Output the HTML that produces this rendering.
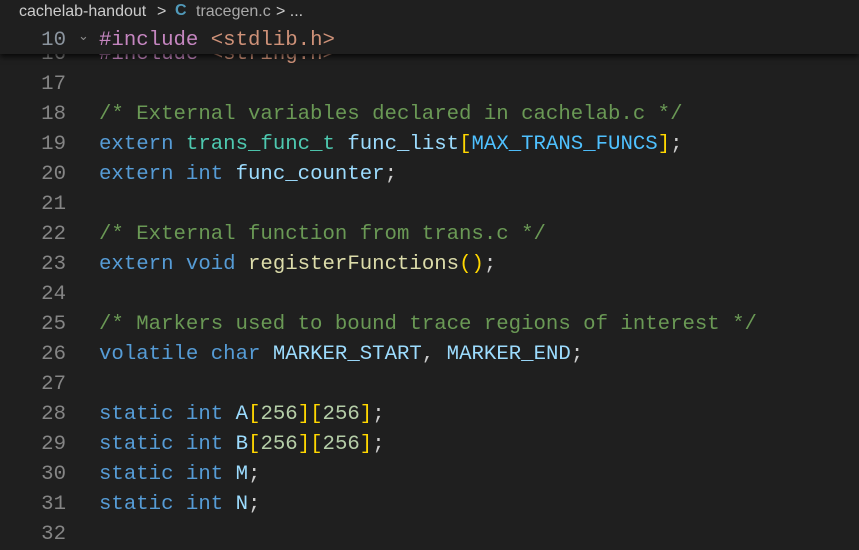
<!DOCTYPE html><html><head><style>
body{margin:0;width:859px;height:541px;background:#1f1f1f;overflow:hidden;position:relative;font-family:"Liberation Mono",monospace;}
.bc{position:absolute;left:0;top:0;width:859px;height:26px;background:#1f1f1f;font-family:"Liberation Sans",sans-serif;font-size:16px;color:#cccccc;z-index:3}
.bc span{position:absolute;top:3px}
.l{position:absolute;left:0;height:30px;line-height:30px;font-size:20.7px;white-space:pre;width:859px}
.n{position:absolute;right:793px;color:#858585}
.c{position:absolute;left:99px;color:#cccccc}
.k{color:#569cd6}.t{color:#4ec9b0}.v{color:#9cdcfe}.f{color:#dcdcaa}.m{color:#4fc1ff}.b{color:#ffd700}.cm{color:#6a9955}.p{color:#c586c0}.s{color:#ce9178}.nu{color:#b5cea8}
.sticky{position:absolute;left:0;top:24px;width:859px;height:30px;background:#1f1f1f;z-index:2;box-shadow:0 3px 5px rgba(0,0,0,0.7)}
</style></head><body>
<div class="bc"><span style="left:19px">cachelab-handout</span><span style="left:157px">&gt;</span><span style="left:175px;color:#519aba;font-weight:bold;font-size:16px;top:2px">C</span><span style="left:196px;color:#a9a9a9">tracegen.c</span><span style="left:276px">&gt; ...</span></div>
<div class="sticky"><div class="l" style="top:2px"><span class="n" style="color:#8b949e">10</span><span style="position:absolute;left:78px;color:#8b8b8b;font-size:13px;top:-4px">⌄</span><span class="c"><span class="p">#include</span> <span class="s">&lt;stdlib.h&gt;</span></span></div></div>
<div class="l" style="top:40px"><span class="n">16</span><span class="c"><span class="p">#include</span> <span class="s">&lt;string.h&gt;</span></span></div>
<div class="l" style="top:70px"><span class="n">17</span></div>
<div class="l" style="top:100px"><span class="n">18</span><span class="c cm">/* External variables declared in cachelab.c */</span></div>
<div class="l" style="top:130px"><span class="n">19</span><span class="c"><span class="k">extern</span> <span class="t">trans_func_t</span> <span class="v">func_list</span><span class="b">[</span><span class="m">MAX_TRANS_FUNCS</span><span class="b">]</span>;</span></div>
<div class="l" style="top:160px"><span class="n">20</span><span class="c"><span class="k">extern</span> <span class="k">int</span> <span class="v">func_counter</span>;</span></div>
<div class="l" style="top:190px"><span class="n">21</span></div>
<div class="l" style="top:220px"><span class="n">22</span><span class="c cm">/* External function from trans.c */</span></div>
<div class="l" style="top:250px"><span class="n">23</span><span class="c"><span class="k">extern</span> <span class="k">void</span> <span class="f">registerFunctions</span><span class="b">()</span>;</span></div>
<div class="l" style="top:280px"><span class="n">24</span></div>
<div class="l" style="top:310px"><span class="n">25</span><span class="c cm">/* Markers used to bound trace regions of interest */</span></div>
<div class="l" style="top:340px"><span class="n">26</span><span class="c"><span class="k">volatile</span> <span class="k">char</span> <span class="v">MARKER_START</span>, <span class="v">MARKER_END</span>;</span></div>
<div class="l" style="top:370px"><span class="n">27</span></div>
<div class="l" style="top:400px"><span class="n">28</span><span class="c"><span class="k">static</span> <span class="k">int</span> <span class="v">A</span><span class="b">[</span><span class="nu">256</span><span class="b">][</span><span class="nu">256</span><span class="b">]</span>;</span></div>
<div class="l" style="top:430px"><span class="n">29</span><span class="c"><span class="k">static</span> <span class="k">int</span> <span class="v">B</span><span class="b">[</span><span class="nu">256</span><span class="b">][</span><span class="nu">256</span><span class="b">]</span>;</span></div>
<div class="l" style="top:460px"><span class="n">30</span><span class="c"><span class="k">static</span> <span class="k">int</span> <span class="v">M</span>;</span></div>
<div class="l" style="top:490px"><span class="n">31</span><span class="c"><span class="k">static</span> <span class="k">int</span> <span class="v">N</span>;</span></div>
<div class="l" style="top:520px"><span class="n">32</span></div>
</body></html>
